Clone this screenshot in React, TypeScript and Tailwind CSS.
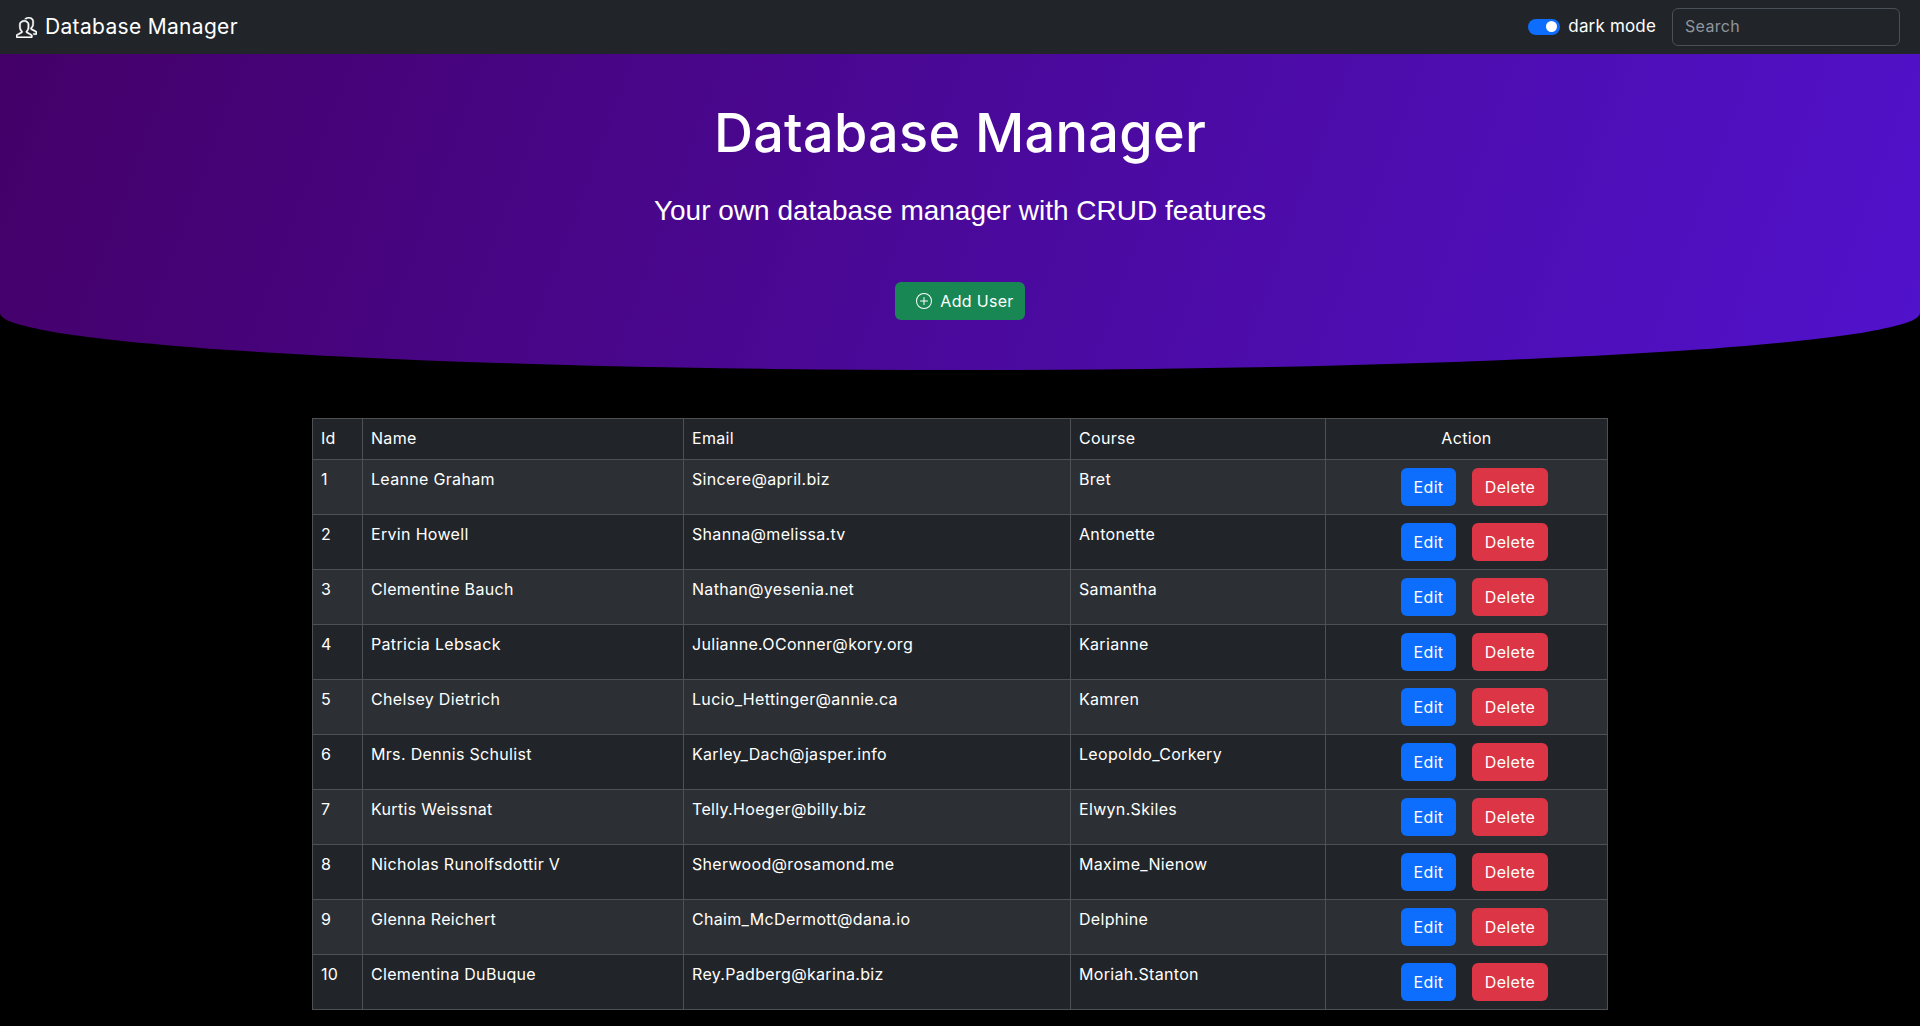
import { SlPeople } from 'react-icons/sl';
import { BsPlusCircle } from 'react-icons/bs';

const users = [
  { id: 1, name: 'Leanne Graham', email: 'Sincere@april.biz', course: 'Bret' },
  { id: 2, name: 'Ervin Howell', email: 'Shanna@melissa.tv', course: 'Antonette' },
  { id: 3, name: 'Clementine Bauch', email: 'Nathan@yesenia.net', course: 'Samantha' },
  { id: 4, name: 'Patricia Lebsack', email: 'Julianne.OConner@kory.org', course: 'Karianne' },
  { id: 5, name: 'Chelsey Dietrich', email: 'Lucio_Hettinger@annie.ca', course: 'Kamren' },
  { id: 6, name: 'Mrs. Dennis Schulist', email: 'Karley_Dach@jasper.info', course: 'Leopoldo_Corkery' },
  { id: 7, name: 'Kurtis Weissnat', email: 'Telly.Hoeger@billy.biz', course: 'Elwyn.Skiles' },
  { id: 8, name: 'Nicholas Runolfsdottir V', email: 'Sherwood@rosamond.me', course: 'Maxime_Nienow' },
  { id: 9, name: 'Glenna Reichert', email: 'Chaim_McDermott@dana.io', course: 'Delphine' },
  { id: 10, name: 'Clementina DuBuque', email: 'Rey.Padberg@karina.biz', course: 'Moriah.Stanton' },
];

export default function App() {
  return (
    <div className="min-h-[1026px] bg-black text-white font-['Inter',sans-serif] tracking-[0.02em] overflow-hidden">
      <nav className="h-[54px] bg-[#212529] flex items-center justify-between pl-4 pr-5">
        <div className="flex items-center gap-2 text-[21px]">
          <SlPeople className="w-[21px] h-[21px] stroke-[24]" />
          <span>Database Manager</span>
        </div>
        <div className="flex items-center gap-4 mb-[1px]">
          <div className="flex items-center gap-2">
            <span className="w-8 h-4 rounded-full bg-[#0d6efd] flex items-center justify-end pr-[3px]">
              <span className="w-[11px] h-[11px] rounded-full bg-white" />
            </span>
            <span className="text-[17px] tracking-[0.01em]">dark mode</span>
          </div>
          <input
            placeholder="Search"
            className="w-[228px] h-[38px] px-3 pb-[2px] rounded-md bg-[#212529] border border-[#495057] text-[16px] placeholder:text-[#8f969c] outline-none"
          />
        </div>
      </nav>

      <header className="h-[316px] flex flex-col items-center bg-[linear-gradient(110deg,#440068,#5112cc)] [border-radius:0_0_50%_50%/0_0_18%_18%]">
        <h1 className="mt-[47px] text-[54px] leading-[1.2] font-medium tracking-[0.005em]">Database Manager</h1>
        <p className="mt-[28px] text-[28px] tracking-normal leading-[1.2] font-['Liberation_Sans',sans-serif]">
          Your own database manager with CRUD features
        </p>
        <button className="mt-[55px] w-[130px] h-[38px] pl-[10px] rounded-md bg-[#198754] flex items-center justify-center gap-2 text-[16px]">
          <BsPlusCircle className="w-4 h-4 mb-[1px]" />
          Add User
        </button>
      </header>

      <main className="mt-[48px] px-[312px]">
        <table className="w-[1295px] border-collapse table-fixed text-[16px]">
          <colgroup>
            <col className="w-[50px]" />
            <col className="w-[321px]" />
            <col className="w-[387px]" />
            <col className="w-[255px]" />
            <col className="w-[282px]" />
          </colgroup>
          <thead>
            <tr className="bg-[#212529] text-left">
              <th className="border border-[#4d5154] px-2 pt-[7px] pb-[9px] font-normal">Id</th>
              <th className="border border-[#4d5154] px-2 pt-[7px] pb-[9px] font-normal">Name</th>
              <th className="border border-[#4d5154] px-2 pt-[7px] pb-[9px] font-normal">Email</th>
              <th className="border border-[#4d5154] px-2 pt-[7px] pb-[9px] font-normal">Course</th>
              <th className="border border-[#4d5154] px-2 pt-[7px] pb-[9px] font-normal text-center">Action</th>
            </tr>
          </thead>
          <tbody>
            {users.map((u, i) => (
              <tr key={u.id} className={i % 2 === 0 ? 'bg-[#2c3034]' : 'bg-[#212529]'}>
                <td className="border border-[#4d5154] px-2 pt-[7px] pb-2 align-top">{u.id}</td>
                <td className="border border-[#4d5154] px-2 pt-[7px] pb-2 align-top">{u.name}</td>
                <td className="border border-[#4d5154] px-2 pt-[7px] pb-2 align-top">{u.email}</td>
                <td className="border border-[#4d5154] px-2 pt-[7px] pb-2 align-top">{u.course}</td>
                <td className="border border-[#4d5154] p-2 align-top">
                  <div className="flex justify-center gap-4 pl-4">
                    <button className="w-[55px] h-[38px] pb-[1px] rounded-md bg-[#0d6efd]">Edit</button>
                    <button className="w-[76px] h-[38px] pb-[1px] rounded-md bg-[#dc3545]">Delete</button>
                  </div>
                </td>
              </tr>
            ))}
          </tbody>
        </table>
      </main>
    </div>
  );
}
